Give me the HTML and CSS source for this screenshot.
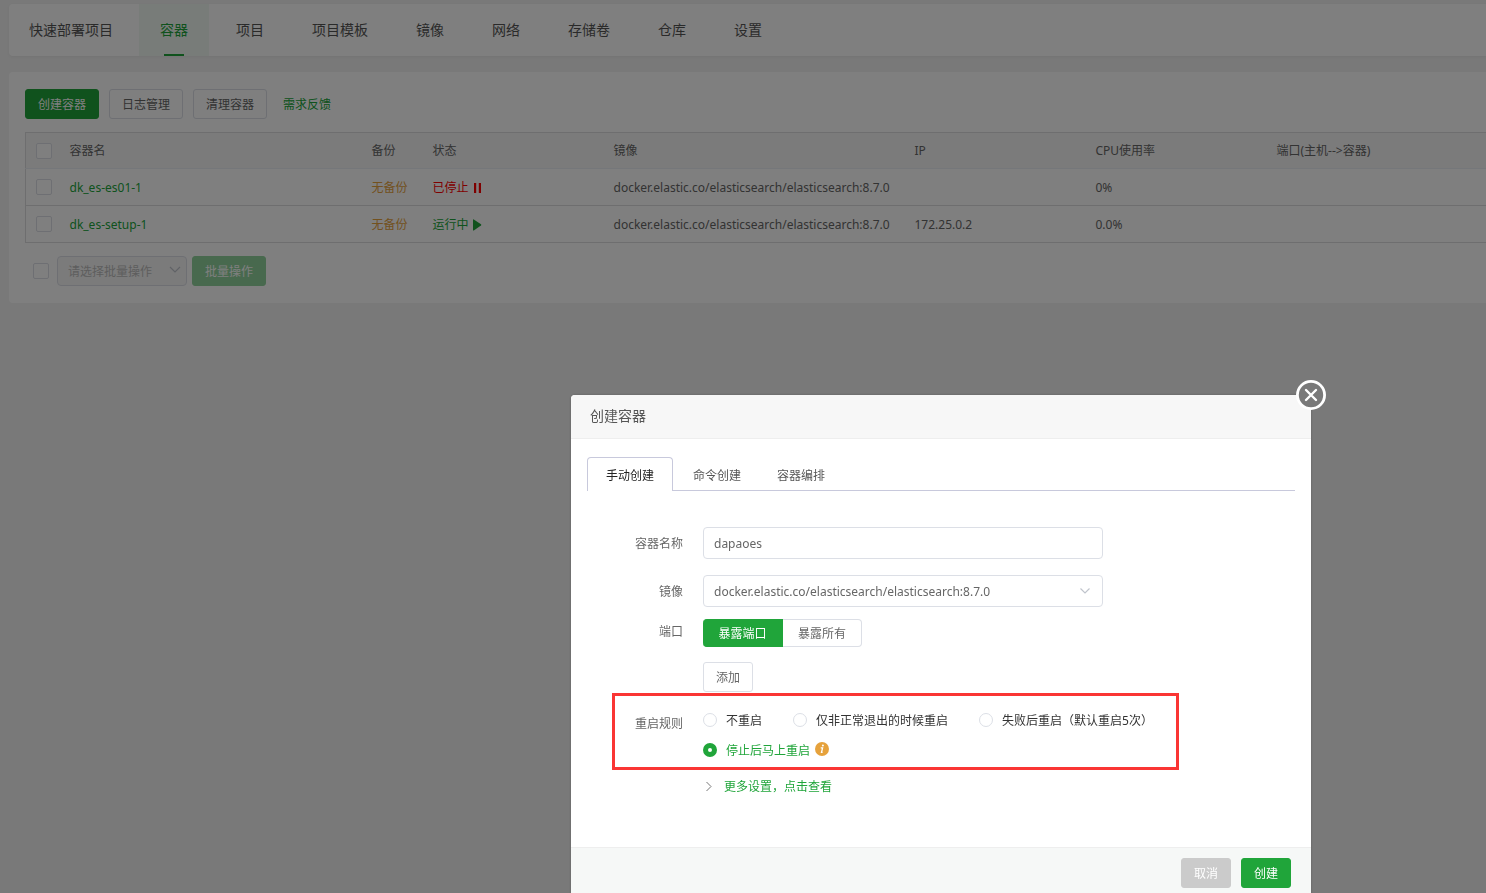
FILE: index.html
```html
<!DOCTYPE html>
<html lang="zh-CN">
<head>
<meta charset="utf-8">
<title>容器</title>
<link rel="stylesheet" href="styles.css">
</head>
<body>
<div class="page">
  <nav class="nav">
    <a class="nav-item" href="#">快速部署项目</a>
    <a class="nav-item active" href="#">容器</a>
    <a class="nav-item" href="#">项目</a>
    <a class="nav-item" href="#">项目模板</a>
    <a class="nav-item" href="#">镜像</a>
    <a class="nav-item" href="#">网络</a>
    <a class="nav-item" href="#">存储卷</a>
    <a class="nav-item" href="#">仓库</a>
    <a class="nav-item" href="#">设置</a>
  </nav>
  <main class="card">
    <div class="toolbar">
      <button class="btn primary" type="button">创建容器</button>
      <button class="btn" type="button">日志管理</button>
      <button class="btn" type="button">清理容器</button>
      <a class="feedback" href="#">需求反馈</a>
    </div>
    <table class="table">
      <colgroup>
        <col class="c-check"><col class="c-name"><col class="c-backup"><col class="c-mid"><col class="c-image"><col class="c-mid"><col class="c-mid"><col>
      </colgroup>
      <thead>
        <tr>
          <th><input class="check" type="checkbox" aria-label="全选"></th>
          <th>容器名</th><th>备份</th><th>状态</th><th>镜像</th><th>IP</th><th>CPU使用率</th><th>端口(主机--&gt;容器)</th>
        </tr>
      </thead>
      <tbody>
        <tr>
          <td><input class="check" type="checkbox" aria-label="dk_es-es01-1"></td>
          <td><a class="green" href="#">dk_es-es01-1</a></td>
          <td><a class="orange" href="#">无备份</a></td>
          <td><a class="status stopped" href="#">已停止<svg width="9" height="10" viewBox="0 0 9 10" aria-hidden="true"><path d="M1 0h2.200v10H1zM5.800 0H8v10H5.800z" fill="currentColor"/></svg></a></td>
          <td>docker.elastic.co/elasticsearch/elasticsearch:8.7.0</td>
          <td></td><td>0%</td><td></td>
        </tr>
        <tr>
          <td><input class="check" type="checkbox" aria-label="dk_es-setup-1"></td>
          <td><a class="green" href="#">dk_es-setup-1</a></td>
          <td><a class="orange" href="#">无备份</a></td>
          <td><a class="status green" href="#">运行中<svg width="9" height="12" viewBox="0 0 9 12" aria-hidden="true"><path d="M0 .8Q0 0 .8.4L8 5.200Q8.800 6 8 6.600L.8 11.400Q0 11.800 0 11z" fill="currentColor"/></svg></a></td>
          <td>docker.elastic.co/elasticsearch/elasticsearch:8.7.0</td>
          <td>172.25.0.2</td><td>0.0%</td><td></td>
        </tr>
      </tbody>
    </table>
    <div class="batch">
      <input class="check" type="checkbox" aria-label="批量选择">
      <div class="select-wrap">
        <select class="batch-select" aria-label="批量操作" disabled><option>请选择批量操作</option></select>
        <svg class="arrow" width="12" height="8" viewBox="0 0 12 8" aria-hidden="true"><path d="M1 1l5 5 5-5" fill="none" stroke="currentColor" stroke-width="1.2"/></svg>
      </div>
      <button class="btn primary faded" type="button" disabled>批量操作</button>
    </div>
  </main>
</div>

<div class="overlay">
  <section class="modal" role="dialog" aria-labelledby="dialog-title">
    <button class="close" type="button" aria-label="关闭">
      <svg width="30" height="30" viewBox="0 0 30 30" aria-hidden="true"><circle cx="15" cy="15" r="13.6" fill="#797979" stroke="#fff" stroke-width="2.8"/><path d="M10 10l10 10M20 10L10 20" stroke="#fff" stroke-width="2.4" stroke-linecap="round"/></svg>
    </button>
    <h2 class="modal-title" id="dialog-title">创建容器</h2>
    <div class="modal-body">
      <div class="tabs" role="tablist">
        <button class="tab current" type="button" role="tab" aria-selected="true">手动创建</button>
        <button class="tab" type="button" role="tab">命令创建</button>
        <button class="tab" type="button" role="tab">容器编排</button>
      </div>
      <form class="form">
        <div class="row">
          <label class="label" for="name">容器名称</label>
          <input class="field" id="name" type="text" value="dapaoes">
        </div>
        <div class="row">
          <label class="label" for="image">镜像</label>
          <div class="select-wrap">
            <select class="field pick" id="image"><option>docker.elastic.co/elasticsearch/elasticsearch:8.7.0</option></select>
            <svg class="arrow" width="12" height="8" viewBox="0 0 12 8" aria-hidden="true"><path d="M1.500 1.500L6 6l4.500-4.500" fill="none" stroke="currentColor" stroke-width="1.200"/></svg>
          </div>
        </div>
        <div class="row ports">
          <span class="label">端口</span>
          <div class="stack">
            <div class="segment">
              <button class="seg on" type="button">暴露端口</button><button class="seg" type="button">暴露所有</button>
            </div>
            <button class="btn small" type="button">添加</button>
          </div>
        </div>
        <div class="row restart">
          <span class="label">重启规则</span>
          <div class="radios">
            <label class="radio"><input type="radio" name="restart"><span class="radio-text">不重启</span></label>
            <label class="radio"><input type="radio" name="restart"><span class="radio-text">仅非正常退出的时候重启</span></label>
            <label class="radio"><input type="radio" name="restart"><span class="radio-text">失败后重启（默认重启5次）</span></label>
            <label class="radio picked"><input type="radio" name="restart" checked><span class="radio-text">停止后马上重启</span><svg class="info" width="14" height="14" viewBox="0 0 14 14" aria-hidden="true"><circle cx="7" cy="7" r="7" fill="#e6a23c"/><circle cx="7.900" cy="3.600" r="1" fill="#fff"/><path d="M5.700 5.800h1.900L6.500 10.300h1.100" fill="none" stroke="#fff" stroke-width="1.300"/></svg></label>
          </div>
          <div class="highlight"></div>
        </div>
        <a class="more" href="#"><svg width="8" height="12" viewBox="0 0 8 12" aria-hidden="true"><path d="M1.500 1L6 5.500 1.500 10" fill="none" stroke="#777"/></svg>更多设置，点击查看</a>
      </form>
    </div>
    <footer class="modal-foot">
      <button class="btn small cancel" type="button">取消</button>
      <button class="btn small primary" type="button">创建</button>
    </footer>
  </section>
</div>
</body>
</html>
```
FILE: styles.css
```css
* { box-sizing: border-box; }
body {
  margin: 0;
  background: #f2f2f2;
  color: #666;
  font: 12px/18px "Noto Sans", "Noto Sans CJK SC", sans-serif;
}
button, input, select { font: inherit; color: inherit; margin: 0; }
a { text-decoration: none; color: inherit; }
.page { padding: 4px 0 0 9px; }

.nav {
  display: flex;
  gap: 6px;
  height: 52px;
  background: #fff;
  border-radius: 4px 0 0 4px;
  box-shadow: 0 1px 3px rgba(0, 0, 0, .05);
}
.nav-item {
  display: flex;
  align-items: center;
  justify-content: center;
  padding: 0 21px;
  font-size: 14px;
  color: #555;
  white-space: nowrap;
}
.nav-item:first-child { padding: 0 20px; }
.nav-item.active {
  flex-direction: column;
  padding-top: 17px;
  justify-content: space-between;
  color: #20a53a;
  background: #f0f8f3;
}
.nav-item.active::after {
  content: "";
  width: 20px;
  height: 2px;
  background: #20a53a;
}

.card {
  margin-top: 16px;
  padding: 17px 0 17px 16px;
  background: #fff;
  border-radius: 4px 0 0 4px;
}
.toolbar { display: flex; align-items: center; gap: 10px; margin-bottom: 13px; }
.btn {
  height: 30px;
  min-width: 74px;
  padding: 2px 0 0;
  border: 1px solid #dcdfe6;
  border-radius: 3px;
  background: #fff;
  color: #666;
}
.btn.small { min-width: 50px; }
.btn.primary { background: #20a53a; border-color: #20a53a; color: #fff; }
.btn.primary.faded { background: #90d29c; border-color: #90d29c; }
.btn.cancel { background: #cbcbcb; border-color: #cbcbcb; color: #fff; }
.feedback { margin-left: 6px; padding-top: 2px; color: #20a53a; }

.table { width: 100%; table-layout: fixed; border-collapse: collapse; border: 1px solid #dcdcdf; border-right: 0; }
.table th, .table td {
  height: 37px;
  padding: 2px 0 0 9px;
  border-bottom: 1px solid #dcdcdf;
  text-align: left;
  font-weight: 400;
  white-space: nowrap;
}
.table th { height: 36px; padding-top: 0; background: #f6f6f6; border-bottom-color: #ebeef5; }
.table th:first-child, .table td:first-child { padding: 0 0 0 10px; }
.c-check { width: 35px; }
.c-name { width: 302px; }
.c-backup { width: 61px; }
.c-mid { width: 181px; }
.c-image { width: 301px; }
.green { color: #20a53a; }
.orange { color: #e6a23c; }
.stopped { color: #f00; }
.status { display: flex; align-items: center; gap: 4px; }
.check {
  display: block;
  appearance: none;
  width: 16px;
  height: 16px;
  border: 1px solid #dcdfe6;
  border-radius: 2px;
  background: #fff;
}

.batch { display: flex; align-items: center; margin: 13px 0 0 8px; }
.select-wrap { position: relative; color: #c0c4cc; }
.arrow { position: absolute; right: 12px; top: 50%; margin-top: -4px; pointer-events: none; }
.batch .select-wrap { margin: 0 5px 0 8px; }
.batch .arrow { right: 6px; margin-top: -5px; }
.batch-select {
  display: block;
  appearance: none;
  width: 130px;
  height: 30px;
  padding: 2px 10px 0;
  border: 1px solid #dcdfe6;
  border-radius: 4px;
  background: #f7f7f7;
  color: #bbb;
  opacity: 1;
}

.overlay { position: fixed; inset: 0; overflow: hidden; background: rgba(0, 0, 0, .5); }
.modal {
  position: absolute;
  left: 571px;
  top: 395px;
  width: 740px;
  background: #fff;
  border-radius: 4px;
  box-shadow: 0 0 3px rgba(0, 0, 0, .2);
}
.close { position: absolute; right: -15px; top: -15px; padding: 0; border: 0; background: none; }
.close svg { display: block; }
.modal-title {
  margin: 0;
  height: 44px;
  padding-left: 19px;
  border-bottom: 1px solid #eee;
  border-radius: 4px 4px 0 0;
  background: #f7f7f7;
  color: #555;
  font-size: 14px;
  font-weight: 400;
  line-height: 42px;
}
.modal-body { padding: 18px 16px 49px; }
.tabs { display: flex; height: 34px; border-bottom: 1px solid #c8c9dc; }
.tab { height: 34px; padding: 4px 18px 0; border: 0; background: none; color: #555; }
.tab.current {
  margin-right: 2px;
  padding: 2px 18px 0;
  border: 1px solid #c8c9dc;
  border-bottom: 0;
  border-radius: 4px 4px 0 0;
  background: #fff;
  color: #222;
}
.form { padding-top: 36px; }
.row { display: flex; align-items: center; margin-bottom: 16px; }
.label { width: 96px; margin-right: 20px; padding-top: 2px; text-align: right; }
.field {
  display: block;
  appearance: none;
  width: 400px;
  height: 32px;
  padding: 0 10px;
  border: 1px solid #dcdfe6;
  border-radius: 4px;
  background: #fff;
  color: #666;
}
.field.pick { padding-top: 2px; }
.row.ports { align-items: flex-start; margin: -4px 0 18px; }
.row.ports .label { padding-top: 4px; }
.stack { display: grid; gap: 15px; justify-items: start; }
.segment { display: flex; height: 28px; }
.seg {
  width: 79px;
  padding: 2px 0 0;
  border: 1px solid #dcdfe6;
  border-left: 0;
  border-radius: 0 4px 4px 0;
  background: #fff;
}
.seg.on { width: 80px; border-color: #20a53a; border-radius: 4px 0 0 4px; background: #20a53a; color: #fff; }
.row.restart { position: relative; align-items: flex-start; margin-bottom: 18px; }
.restart .label { padding-top: 5px; }
.radios { display: flex; flex-wrap: wrap; flex: 1; gap: 10px 31px; }
.radio { display: flex; align-items: center; height: 20px; color: #333; white-space: nowrap; }
.radio-text { padding-top: 2px; }
.radio input {
  appearance: none;
  width: 14px;
  height: 14px;
  margin-right: 9px;
  border: 1px solid #dcdfe6;
  border-radius: 50%;
  background: #fff;
}
.radio input:checked { border: 5px solid #20a53a; }
.radio.picked { color: #20a53a; }
.info { margin: 0 0 2px 5px; }
.highlight {
  position: absolute;
  inset: -17px 116px -10px 25px;
  border: 3px solid #fa3534;
  pointer-events: none;
}
.more { display: inline-flex; align-items: center; gap: 11px; margin-left: 118px; color: #20a53a; }
.modal-foot {
  display: flex;
  justify-content: flex-end;
  gap: 10px;
  padding: 10px 20px;
  border-top: 1px solid #eee;
  border-radius: 0 0 4px 4px;
  background: #f6f8f7;
}
```
